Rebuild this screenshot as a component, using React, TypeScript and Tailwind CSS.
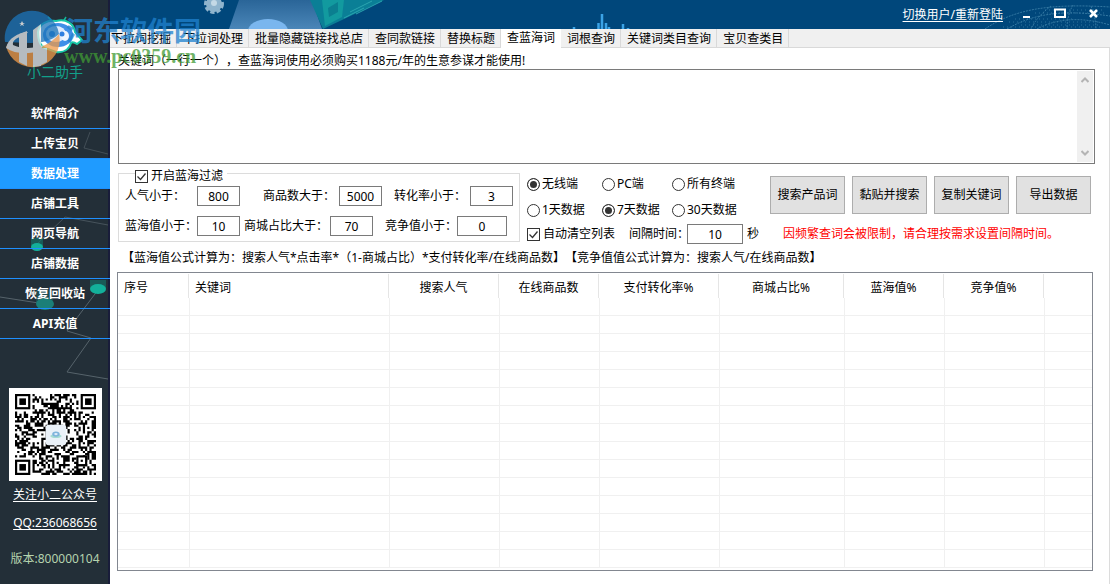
import { useState } from 'react'
import type { ReactNode } from 'react'
import clsx from 'clsx'

const MENU = ['软件简介', '上传宝贝', '数据处理', '店铺工具', '网页导航', '店铺数据', '恢复回收站', 'API充值']

const TABS = [
  '下拉词挖掘',
  '下拉词处理',
  '批量隐藏链接找总店',
  '查同款链接',
  '替换标题',
  '查蓝海词',
  '词根查询',
  '关键词类目查询',
  '宝贝查类目',
]

const COLUMNS = [
  { label: '序号', width: 'w-[71px]', align: 'text-left' },
  { label: '关键词', width: 'w-[200px]', align: 'text-left' },
  { label: '搜索人气', width: 'w-[110px]', align: 'text-center' },
  { label: '在线商品数', width: 'w-[100px]', align: 'text-center' },
  { label: '支付转化率%', width: 'w-[120px]', align: 'text-center' },
  { label: '商城占比%', width: 'w-[125px]', align: 'text-center' },
  { label: '蓝海值%', width: 'w-[100px]', align: 'text-center' },
  { label: '竞争值%', width: 'w-[100px]', align: 'text-center' },
  { label: '', width: '', align: 'text-left' },
]

const ACTIONS = ['搜索产品词', '黏贴并搜索', '复制关键词', '导出数据']

const QR_SIZE = 37

// Builds the dark modules of the code, leaving room for the three finders
function buildQrPath() {
  let seed = 20117
  let d = ''
  for (let y = 0; y < QR_SIZE; y++) {
    for (let x = 0; x < QR_SIZE; x++) {
      seed = (seed * 1103515245 + 12345) % 2147483648
      const inFinder =
        (x < 8 && y < 8) || (x > QR_SIZE - 9 && y < 8) || (x < 8 && y > QR_SIZE - 9)
      if (!inFinder && seed / 2147483648 > 0.49) {
        d += `M${x} ${y}h1v1h-1z`
      }
    }
  }
  return d
}

const QR_PATH = buildQrPath()

function QrCode() {
  const finders = [
    [0, 0],
    [30, 0],
    [0, 30],
  ]
  return (
    <svg viewBox="0 0 37 37" className="block w-full" aria-hidden="true">
      <path d={QR_PATH} fill="#000" />
      {finders.map(([x, y]) => (
        <g key={`${x}-${y}`}>
          <rect x={x + 0.5} y={y + 0.5} width="6" height="6" fill="#fff" stroke="#000" />
          <rect x={x + 2} y={y + 2} width="3" height="3" fill="#000" />
        </g>
      ))}
      <rect x="28.5" y="28.5" width="4" height="4" fill="#fff" stroke="#000" />
      <rect x="30" y="30" width="1" height="1" fill="#000" />
      <rect x="14" y="14" width="9.4" height="9.4" rx="1.4" fill="#eaf1f8" />
      <ellipse cx="18.7" cy="19.2" rx="2.6" ry="0.9" fill="#a5dcd2" />
      <ellipse cx="18.7" cy="18.3" rx="1.7" ry="1.2" fill="#7fb4dc" />
      <ellipse cx="18.7" cy="18.3" rx="0.8" ry="0.5" fill="#e3eefa" />
    </svg>
  )
}

function Logo() {
  return (
    <svg width="110" height="64" viewBox="0 0 110 64" className="block" aria-hidden="true">
      <g fill="none" stroke="#12b89b" strokeWidth="1.5">
        <path d="M48 17l5 5M66 17l-3 5" />
      </g>
      <path
        d="M38 32c1-8 9-12 18-11 10-3 18 3 19 11l7 8-5 4c-3-2-5-2-6-1-2 7-8 10-15 9l-8-3c-6-1-10-6-10-17z"
        fill="#fff"
        stroke="#17c8a8"
        strokeWidth="2"
      />
      <ellipse cx="58" cy="35" rx="15" ry="12" fill="#3f8fe8" />
      <ellipse cx="56" cy="34" rx="10" ry="8" fill="#dceafd" />
      <ellipse cx="65" cy="36" rx="4" ry="5" fill="#eef5ff" />
      <circle cx="52" cy="34" r="3" fill="#2f7fe0" />
      <circle cx="62" cy="34" r="2.5" fill="#2f7fe0" />
    </svg>
  )
}

function SidebarArt() {
  return (
    <svg width="110" height="400" viewBox="0 0 110 400" className="absolute left-0 top-0" aria-hidden="true">
      <g fill="none" stroke="#56636b" strokeWidth="1">
        <path d="M90 132l-6 16 24 6" opacity="0.6" />
        <path d="M37 244l28-27 43 8" opacity="0.7" />
        <path d="M0 297l45 7M98 290l-31 41 24 7-24 34 41 7" />
      </g>
      <rect x="31" y="238" width="12" height="9" fill="#127a6c" opacity="0.6" />
      <ellipse cx="37" cy="247" rx="6" ry="4" fill="#13b09a" />
      <rect x="90" y="280" width="16" height="9" fill="#127a6c" opacity="0.6" />
      <ellipse cx="98" cy="289" rx="8" ry="5" fill="#13b09a" />
      <rect x="36" y="290" width="17" height="14" fill="#1c5f5f" opacity="0.6" />
      <ellipse cx="45" cy="304" rx="9" ry="6" fill="#1b7f78" />
    </svg>
  )
}

function Sidebar() {
  const [active, setActive] = useState('数据处理')

  return (
    <aside className="relative flex w-[110px] shrink-0 flex-col bg-[#232f38] shadow-[inset_-2px_0_0_#191d3a]">
      <SidebarArt />
      <div className="relative h-[99px]">
        <Logo />
        <p className="text-center text-sm leading-4 text-[#12a08a]">小二助手</p>
      </div>
      <nav className="relative flex flex-col">
        {MENU.map((item) => (
          <button
            key={item}
            type="button"
            onClick={() => setActive(item)}
            className={clsx(
              'h-[30px] border-b border-[#1e90ff] text-center font-bold leading-4 text-white',
              active === item && 'bg-[#1f9bff]'
            )}
          >
            {item}
          </button>
        ))}
      </nav>
      <div className="relative mt-[49px] flex flex-col items-center">
        <div className="w-[93px] bg-white p-1.5">
          <QrCode />
        </div>
        <a href="#follow" className="mt-1.5 leading-4 text-white underline underline-offset-2">
          关注小二公众号
        </a>
        <a href="#qq" className="mt-3 leading-4 text-white underline underline-offset-2">
          QQ:236068656
        </a>
        <p className="mt-5 leading-4 text-[#b5d3ae]">版本:800000104</p>
      </div>
    </aside>
  )
}

function HeaderArt() {
  return (
    <>
      <svg width="600" height="29" viewBox="110 0 600 29" className="absolute left-0 top-0" aria-hidden="true">
        <defs>
          <linearGradient id="beam" x1="0" y1="0" x2="0" y2="1">
            <stop offset="0" stopColor="#2a6598" />
            <stop offset="1" stopColor="#4a86b8" />
          </linearGradient>
        </defs>
        <circle cx="214" cy="4" r="8" fill="#8fb4cd" stroke="#8fb4cd" strokeWidth="4" strokeDasharray="4 2" />
        <circle cx="214" cy="3" r="3" fill="#c4d9e6" />
        <path d="M239 0h73l10 29h-93z" fill="url(#beam)" />
        <ellipse cx="268" cy="31" rx="20" ry="12" fill="#7ab6ee" />
        <path d="M310 0h74l-61 29z" fill="#0a7f96" />
        <path d="M322 0h22l-2 17-17 9z" fill="#129a9f" />
        <path d="M328 8l10-6v10l-9 5z" fill="#0b7f90" />
        <path d="M350 12l22-11M356 14l26-13M344 18l20-10" stroke="#2aa5b0" strokeWidth="1" fill="none" />
        <path
          d="M574 27v2M598.500 23v6M602 14v15M606 23v6M609 27v2M623 24v5M628 28v1"
          stroke="#3ba3e6"
          strokeWidth="2.500"
        />
      </svg>
      <svg width="125" height="29" viewBox="0 0 125 29" className="absolute right-0 top-0" aria-hidden="true">
        <g fill="none" stroke="#3f83ab" strokeWidth="1" strokeDasharray="2 1" opacity="0.8">
          <path d="M0 29C28 10 62 3 125 7M22 29C48 14 76 9 125 16M52 29C70 19 95 16 125 25" />
          <path d="M66 6c-8 6-16 14-20 23M88 5c-4 7-6 15-6 24M106 6c3 8 5 15 5 23" />
        </g>
        <g fill="none" stroke="#3f83ab" strokeWidth="1" strokeDasharray="1 3" opacity="0.7">
          <path d="M30 19h60M24 22h90M36 25h80M50 13h70M18 27h100M60 10h60" />
        </g>
      </svg>
    </>
  )
}

function TitleBar() {
  return (
    <header className="relative h-[29px] bg-[#00477b] text-white">
      <HeaderArt />
      <div className="relative flex h-full items-center justify-end gap-5 pr-3">
        <a href="#switch" className="leading-4 underline underline-offset-2">
          切换用户/重新登陆
        </a>
        <div className="flex items-center gap-[23px]">
          <button type="button" aria-label="最小化">
            <svg width="8" height="14" viewBox="0 0 8 14" className="block">
              <path d="M0 9h7" stroke="#fff" strokeWidth="2" />
            </svg>
          </button>
          <button type="button" aria-label="最大化">
            <svg width="12" height="14" viewBox="0 0 12 14" className="block">
              <path d="M1 1.500h10v7.500h-10z" fill="none" stroke="#fff" strokeWidth="2" />
            </svg>
          </button>
          <button type="button" aria-label="关闭">
            <svg width="9" height="14" viewBox="0 0 9 14" className="block">
              <path d="M1 2l7 7M8 2l-7 7" stroke="#fff" strokeWidth="2.500" />
            </svg>
          </button>
        </div>
      </div>
    </header>
  )
}

function TabBar() {
  const [active, setActive] = useState('查蓝海词')

  return (
    <div role="tablist" className="flex h-[19px] bg-[#f0f0f0]">
      {TABS.map((tab, i) => (
        <button
          key={tab}
          type="button"
          role="tab"
          aria-selected={active === tab}
          onClick={() => setActive(tab)}
          className={clsx(
            'shrink-0 whitespace-nowrap leading-4',
            active === tab
              ? 'bg-white px-1.5 pb-0.5'
              : 'border-b border-r border-[#d9d9d9] pr-[5px] pt-0.5',
            active !== tab && (i === 0 ? 'pl-px' : 'pl-1.5')
          )}
        >
          {tab}
        </button>
      ))}
      <div className="flex-1 border-b border-[#d9d9d9]" />
    </div>
  )
}

function Checkbox({ children }: { children: ReactNode }) {
  return (
    <label className="flex items-center gap-[3px] whitespace-nowrap leading-4">
      <span className="grid">
        <input
          type="checkbox"
          defaultChecked
          className="peer size-[13px] appearance-none border border-[#333] bg-white [grid-area:1/1]"
        />
        <svg
          viewBox="0 0 13 13"
          className="pointer-events-none invisible size-[13px] [grid-area:1/1] peer-checked:visible"
          aria-hidden="true"
        >
          <path d="M2.500 6.500l3 3 5-6" fill="none" stroke="#333" strokeWidth="1.300" />
        </svg>
      </span>
      {children}
    </label>
  )
}

function RadioGroup({ name, options, initial }: { name: string; options: string[]; initial: string }) {
  return (
    <div className="grid grid-cols-[75px_70px_80px]">
      {options.map((option) => (
        <label key={option} className="flex items-center gap-0.5 whitespace-nowrap leading-4">
          <input
            type="radio"
            name={name}
            defaultChecked={option === initial}
            className="size-[13px] appearance-none rounded-full border border-[#333] bg-white shadow-[inset_0_0_0_2px_#fff] checked:bg-[#333]"
          />
          {option}
        </label>
      ))}
    </div>
  )
}

interface NumberFieldProps {
  id: string
  label: string
  value: string
  labelWidth: string
  inputWidth?: string
}

function NumberField({ id, label, value, labelWidth, inputWidth = 'w-[43px]' }: NumberFieldProps) {
  return (
    <div className="flex items-center">
      <label htmlFor={id} className={clsx('whitespace-nowrap leading-4', labelWidth)}>
        {label}
      </label>
      <input
        id={id}
        type="text"
        defaultValue={value}
        className={clsx('h-5 border border-[#7a7a7a] bg-white text-center leading-4', inputWidth)}
      />
    </div>
  )
}

function FilterPanel() {
  return (
    <fieldset className="w-[402px] shrink-0 border border-[#dcdcdc] pb-[5px] pl-1.5">
      <legend className="ml-2.5 h-2.5 pr-1">
        <Checkbox>开启蓝海过滤</Checkbox>
      </legend>
      <div className="flex pt-2">
        <NumberField id="popularity" label="人气小于：" value="800" labelWidth="w-[72px]" />
        <div className="ml-[23px]">
          <NumberField id="goods" label="商品数大于：" value="5000" labelWidth="w-[76px]" />
        </div>
        <div className="ml-3">
          <NumberField id="conversion" label="转化率小于：" value="3" labelWidth="w-[76px]" />
        </div>
      </div>
      <div className="flex pt-2.5">
        <NumberField id="blue" label="蓝海值小于：" value="10" labelWidth="w-[72px]" />
        <div className="ml-1">
          <NumberField id="mall" label="商城占比大于：" value="70" labelWidth="w-[86px]" />
        </div>
        <div className="ml-3">
          <NumberField
            id="competition"
            label="竞争值小于："
            value="0"
            labelWidth="w-[72px]"
            inputWidth="w-[50px]"
          />
        </div>
      </div>
    </fieldset>
  )
}

function SearchPanel() {
  return (
    <div className="ml-[7px] mt-2 flex flex-1 flex-col gap-1.5">
      <div className="flex">
        <div className="mr-[18px] flex flex-col gap-2.5">
          <RadioGroup name="device" options={['无线端', 'PC端', '所有终端']} initial="无线端" />
          <RadioGroup name="period" options={['1天数据', '7天数据', '30天数据']} initial="7天数据" />
        </div>
        <div className="flex gap-[7px]">
          {ACTIONS.map((action) => (
            <button
              key={action}
              type="button"
              className="h-[38px] w-[75px] whitespace-nowrap border border-[#adadad] bg-[#e1e1e1] text-center"
            >
              {action}
            </button>
          ))}
        </div>
      </div>
      <div className="flex items-center whitespace-nowrap leading-4">
        <Checkbox>自动清空列表</Checkbox>
        <div className="ml-3.5">
          <NumberField
            id="interval"
            label="间隔时间："
            value="10"
            labelWidth="w-[58px]"
            inputWidth="w-[56px]"
          />
        </div>
        <span className="ml-1">秒</span>
        <span className="ml-6 text-[#ff0000]">因频繁查词会被限制，请合理按需求设置间隔时间。</span>
      </div>
    </div>
  )
}

function KeywordBox() {
  return (
    <div className="flex flex-col">
      <label htmlFor="keywords" className="pt-[5px] leading-4">
        关键词（一行一个），查蓝海词使用必须购买1188元/年的生意参谋才能使用!
      </label>
      <div className="flex h-[95px] border border-[#7a7a7a] bg-white p-px">
        <textarea id="keywords" className="flex-1 resize-none px-1 leading-4 outline-none" />
        <div className="flex w-4 flex-col items-center justify-between bg-[#f0f0f0] py-1.5">
          <svg width="8" height="6" viewBox="0 0 8 6" aria-hidden="true">
            <path d="M0.500 5l3.500-3.500 3.500 3.500" fill="none" stroke="#b4b4b4" strokeWidth="2" />
          </svg>
          <svg width="8" height="6" viewBox="0 0 8 6" aria-hidden="true">
            <path d="M0.500 1l3.500 3.500 3.500-3.500" fill="none" stroke="#b4b4b4" strokeWidth="2" />
          </svg>
        </div>
      </div>
    </div>
  )
}

function ResultTable() {
  const rows = Array.from({ length: 15 }, (_, i) => i)

  return (
    <div className="-ml-px mr-0.5 mt-1.5 border border-[#828790] bg-white pb-0.5 pt-px">
      <table className="w-full table-fixed border-separate border-spacing-0">
        <thead>
          <tr className="h-6">
            {COLUMNS.map((col, i) => (
              <th
                key={col.label}
                className={clsx(
                  'whitespace-nowrap px-1.5 pb-0 pt-1 font-normal leading-4',
                  col.width,
                  col.align,
                  i < COLUMNS.length - 1 && 'border-r border-[#e5e5e5]'
                )}
              >
                {col.label}
              </th>
            ))}
          </tr>
        </thead>
        <tbody>
          {rows.map((row) => (
            <tr key={row} className="h-[18px]">
              {COLUMNS.map((col, i) => (
                <td
                  key={col.label}
                  className={clsx('border-b border-[#f0f0f0] p-0', i > 0 && 'border-l')}
                />
              ))}
            </tr>
          ))}
        </tbody>
      </table>
    </div>
  )
}

function Watermark() {
  return (
    <div className="pointer-events-none absolute left-1 top-2.5 flex opacity-75">
      <svg width="58" height="58" viewBox="0 0 58 58" aria-hidden="true">
        <path d="M1 32a27 27 0 0 1 54-8c-14 13-34 8-54 8z" fill="#1b74b8" />
        <path d="M55 24a27 27 0 0 1-53 12c20 8 42 2 53-12z" fill="#f09a48" />
        <path d="M2 38C4 28 14 23 24 22l-3 4C12 27 8 31 9 35c8 4 20 4 30 0l-2 5c-12 5-26 4-35-2z" fill="#e6eaee" />
        <path d="M15 24l8-3v35l-8-4zM29 20l8-6v42l-8 1z" fill="#e6eaee" />
        <path d="M29 38h14v14l-6 3v-11h-8z" fill="#e6eaee" />
        <path d="M18 11l1 2 2 0-2 1 1 2-2-1-2 1 1-2-2-1 2 0z" fill="#fff" />
      </svg>
      <div className="flex flex-col font-['Liberation_Serif','Noto_Sans_CJK_SC',serif] font-bold">
        <span className="ml-1 mt-1.5 whitespace-nowrap text-[27px] leading-8 text-[#1f82cf]">河东软件园</span>
        <span className="ml-0.5 whitespace-nowrap text-xl leading-4 text-[#3f9a35]">www.pc0359.cn</span>
      </div>
    </div>
  )
}

export default function App() {
  return (
    <div
      lang="zh-CN"
      className="relative flex min-h-screen bg-white font-['Noto_Sans','Noto_Sans_CJK_SC',sans-serif] text-xs text-black [text-spacing-trim:space-all]"
    >
      <Sidebar />
      <div className="flex min-w-0 flex-1 flex-col">
        <TitleBar />
        <TabBar />
        <main className="flex-1 border-r border-[#dcdcdc] pb-3 pl-2 pr-3.5">
          <KeywordBox />
          <div className="mt-1 flex items-start">
            <FilterPanel />
            <SearchPanel />
          </div>
          <p className="whitespace-nowrap pl-1 pt-1.5 leading-4">
            【蓝海值公式计算为：搜索人气*点击率*（1-商城占比）*支付转化率/在线商品数】【竞争值值公式计算为：搜索人气/在线商品数】
          </p>
          <ResultTable />
        </main>
      </div>
      <Watermark />
    </div>
  )
}
